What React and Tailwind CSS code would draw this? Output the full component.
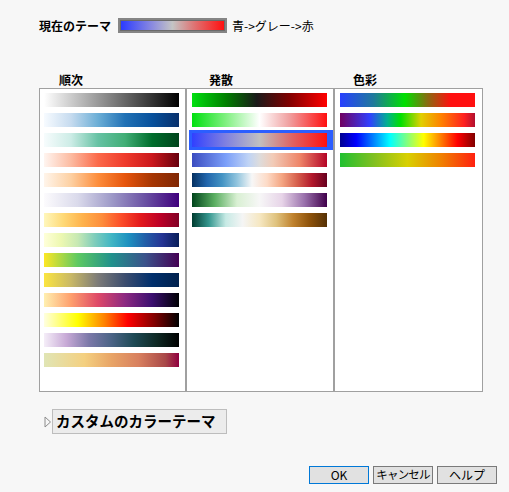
import React from "react";

const seq = [
  "linear-gradient(to right,#ffffff,#000000)",
  "linear-gradient(to right,#f7fbff,#c6dbef,#6baed6,#2171b5,#08519c,#08306b)",
  "linear-gradient(to right,#f7fcfd,#ccece6,#66c2a4,#41ae76,#006d2c,#00441b)",
  "linear-gradient(to right,#fff5f0,#fcbba1,#fb6a4a,#ef3b2c,#cb181d,#67000d)",
  "linear-gradient(to right,#fff5eb,#fdd0a2,#fd8d3c,#e6550d,#a63603,#7f2704)",
  "linear-gradient(to right,#fcfbfd,#dadaeb,#9e9ac8,#6a51a3,#3f007d)",
  "linear-gradient(to right,#fff7bc,#fed976,#feb24c,#fd8d3c,#fc4e2a,#e31a1c,#bd0026,#800026)",
  "linear-gradient(to right,#ffffd9,#edf8b1,#c7e9b4,#7fcdbb,#41b6c4,#1d91c0,#225ea8,#253494,#081d58)",
  "linear-gradient(to right,#fde725,#5ec962,#21918c,#3b528b,#440154)",
  "linear-gradient(to right,#fbe540,#c8b866,#7c7b78,#3c4d6e,#002f6c,#00204c)",
  "linear-gradient(to right,#fff0b0,#fe9f6d,#de4968,#8c2981,#3b0f70,#000004)",
  "linear-gradient(to right,#ffffe0,#ffff00 25%,#ff8000 45%,#ff0000 62%,#800000 82%,#000000)",
  "linear-gradient(to right,#f5eef8,#c7a9d6,#7b78a8,#4b6486,#1e4a55,#0f2a25,#000000)",
  "linear-gradient(to right,#e0e5b5,#f4d080 30%,#e8a467 50%,#d8805f 70%,#a84848 90%,#900040)",
];

const div = [
  "linear-gradient(to right,#00e010,#008000 25%,#1a1a1a 48%,#800000 72%,#ff0000)",
  "linear-gradient(to right,#00e010,#80f080 25%,#ffffff 50%,#f0a0a0 72%,#ff1010)",
  "linear-gradient(to right,#3040ff,#8080e0 25%,#c0c0c0 50%,#e06060 75%,#ff1010)",
  "linear-gradient(to right,#3b4cc0,#7b9ff9 25%,#c0d4f5 42%,#dddcdc 50%,#f2cbb7 60%,#ee8468 80%,#b40426)",
  "linear-gradient(to right,#053061,#2166ac,#4393c3,#92c5de,#f7f7f7,#fddbc7,#f4a582,#d6604d,#b2182b,#67001f)",
  "linear-gradient(to right,#00441b,#5aae61,#d9f0d3,#f7f7f7,#e7d4e8,#9970ab,#40004b)",
  "linear-gradient(to right,#003c30,#35978f,#c7eae5,#f5f5f5,#f6e8c3,#dfc27d,#bf812d,#8c510a,#543005)",
];

const col = [
  "linear-gradient(to right,#2840ff,#1f7a9a 25%,#00e000 48%,#8a6a10 65%,#ff1010 82%,#ff1010)",
  "linear-gradient(to right,#700060,#3040ff 22%,#00b090 35%,#00e000 45%,#e0d000 60%,#ff8000 75%,#ff2020 92%,#b01030)",
  "linear-gradient(to right,#00008f,#0000ff 12%,#00ffff 37%,#ffff00 62%,#ff0000 87%,#800000)",
  "linear-gradient(to right,#20c030,#80c020 25%,#d8d000 50%,#f08000 75%,#ff2010)",
];

function Column({ items, selected, className }) {
  return (
    <div className={className}>
      {items.map((g, i) => (
        <div
          key={i}
          className={
            "h-[20px] pl-[3px] pt-[3px] " +
            (i === selected ? "bg-[#2b5eff]" : "")
          }
        >
          <div className="h-[14px] w-[135px]" style={{ backgroundImage: g }} />
        </div>
      ))}
    </div>
  );
}

export default function App() {
  return (
    <div
      className="w-[509px] h-[492px] bg-[#f7f7f7] text-black flex flex-col"
      style={{ fontFamily: '"Noto Sans CJK JP", "Noto Sans", sans-serif' }}
    >
      <div className="flex items-center h-[15px] mt-[18px] pl-[39px]">
        <span className="text-[12px] font-bold leading-[15px] w-[79px]">現在のテーマ</span>
        <div className="w-[109px] h-[15px] border-2 border-[#858585] bg-[#c0c0c0]">
          <div
            className="w-full h-full border border-[#6a6a6a]"
            style={{ backgroundImage: "linear-gradient(to right,#2b3bff,#8a8ae0 30%,#c4c4c4 50%,#e07070 72%,#ff1010)" }}
          />
        </div>
        <span className="text-[12px] leading-[15px] ml-[5px]">青-&gt;グレー-&gt;赤</span>
      </div>

      <div className="flex h-[17px] mt-[38px] pl-[39px] text-[12px] font-bold leading-[17px]">
        <div className="w-[148px] pl-[20px]">順次</div>
        <div className="w-[148px] pl-[22px]">発散</div>
        <div className="pl-[18px]">色彩</div>
      </div>

      <div className="ml-[39px] w-[444px] h-[304px] border border-[#a0a0a0] bg-white flex">
        <Column items={seq} className="w-[147px] pl-[1px] pt-[1px] border-r-2 border-[#a0a0a0]" />
        <Column items={div} selected={2} className="w-[148px] pl-[2px] pt-[1px] border-r-2 border-[#a0a0a0]" />
        <Column items={col} className="flex-1 pl-[2px] pt-[1px]" />
      </div>

      <div className="flex items-center mt-[17px] pl-[44px]">
        <svg width="8" height="12" viewBox="0 0 8 12">
          <path d="M1 1 L6.5 6 L1 11 Z" fill="none" stroke="#8c8c8c" strokeWidth="1" />
        </svg>
        <div className="w-[175px] h-[25px] border border-[#bdbdbd] bg-[#ececec] flex items-center pl-[3px] text-[14.5px] font-bold leading-none">
          カスタムのカラーテーマ
        </div>
      </div>

      <div className="flex justify-end gap-[4px] mt-[32px] pr-[12px] text-[12px] leading-none whitespace-nowrap">
        <button className="w-[60px] h-[18px] border border-[#0078d7] bg-[#e1e1e1] flex items-center justify-center">OK</button>
        <button className="w-[60px] h-[18px] border border-[#7a7a7a] bg-[#e1e1e1] flex items-center justify-center tracking-[-0.8px] text-[11.5px]">キャンセル</button>
        <button className="w-[60px] h-[18px] border border-[#7a7a7a] bg-[#e1e1e1] flex items-center justify-center">ヘルプ</button>
      </div>
    </div>
  );
}
